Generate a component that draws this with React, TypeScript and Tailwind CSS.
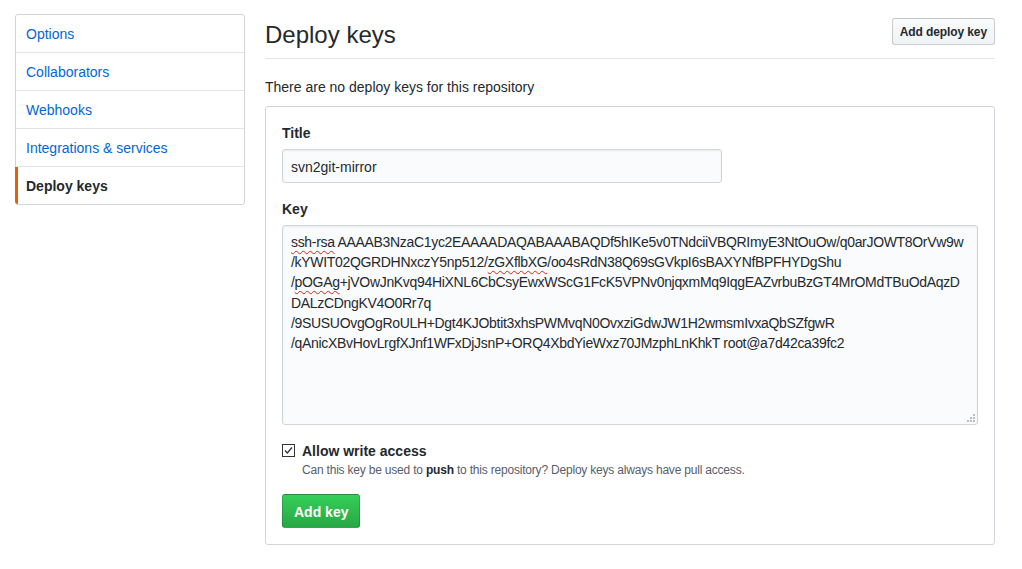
import React from "react";

const menu = [
  { label: "Options" },
  { label: "Collaborators" },
  { label: "Webhooks" },
  { label: "Integrations & services" },
  { label: "Deploy keys", selected: true },
];

const Squiggle = ({ children }: { children: React.ReactNode }) => (
  <span className="underline decoration-wavy decoration-[#e0211b] decoration-1 underline-offset-[3px]">
    {children}
  </span>
);

const Sidebar = () => (
  <nav className="w-[230px] shrink-0 self-start rounded-[3px] border border-[#d1d5da] bg-white">
    {menu.map((item, i) => (
      <a
        key={item.label}
        href="#"
        className={
          "relative block px-[10px] pt-[9px] pb-[7px] text-[14px] leading-[21px] " +
          (i < menu.length - 1 ? "border-b border-[#e1e4e8] " : "") +
          (item.selected ? "font-semibold text-[#24292e]" : "text-[#0366d6]")
        }
      >
        {item.selected && (
          <span className="absolute -left-px top-0 bottom-0 w-[3px] rounded-bl-[3px] bg-[#e36209]" />
        )}
        {item.label}
      </a>
    ))}
  </nav>
);

const KeyText = () => (
  <div className="whitespace-pre text-[14px] leading-[20.2px] tracking-[-0.32px] text-[#24292e]">
    <Squiggle>ssh-rsa</Squiggle>
    {" AAAAB3NzaC1yc2EAAAADAQABAAABAQDf5hIKe5v0TNdciiVBQRImyE3NtOuOw/q0arJOWT8OrVw9w\n/kYWIT02QGRDHNxczY5np512/"}
    <Squiggle>zGXflbXG</Squiggle>
    {"/oo4sRdN38Q69sGVkpI6sBAXYNfBPFHYDgShu\n/"}
    <Squiggle>pOGAg</Squiggle>
    {"+jVOwJnKvq94HiXNL6CbCsyEwxWScG1FcK5VPNv0njqxmMq9IqgEAZvrbuBzGT4MrOMdTBuOdAqzD\nDALzCDngKV4O0Rr7q\n/9SUSUOvgOgRoULH+Dgt4KJObtit3xhsPWMvqN0OvxziGdwJW1H2wmsmIvxaQbSZfgwR\n/qAnicXBvHovLrgfXJnf1WFxDjJsnP+ORQ4XbdYieWxz70JMzphLnKhkT root@a7d42ca39fc2"}
  </div>
);

export default function App() {
  return (
    <div
      className="min-h-screen bg-white text-[#24292e]"
      style={{ fontFamily: '"Liberation Sans", Arial, sans-serif' }}
    >
      <div className="flex gap-[20px] pl-[15px] pt-[14px]">
        <Sidebar />

        <main className="w-[730px] shrink-0">
          <div className="flex items-start justify-between border-b border-[#e1e4e8] pt-[5px] pb-[7px]">
            <h2 className="text-[24px] font-normal leading-[32px] text-[#24292e]">Deploy keys</h2>
            <button className="-mt-px rounded-[3px] border border-[rgba(27,31,35,0.2)] bg-gradient-to-b from-[#fafbfc] to-[#eff3f6] px-[7px] pt-[4px] pb-[2px] text-[12px] font-semibold leading-[19px] tracking-[-0.1px] text-[#24292e]">
              Add deploy key
            </button>
          </div>

          <p className="mt-[18px] mb-[8px] text-[14px] leading-[21px]">
            There are no deploy keys for this repository
          </p>

          <form className="rounded-[3px] border border-[#d1d5da] p-[16px]">
            <label className="block text-[14px] font-semibold leading-[21px]">Title</label>
            <input
              type="text"
              defaultValue="svn2git-mirror"
              className="mt-[5px] block h-[34px] w-[440px] rounded-[3px] border border-[#d1d5da] bg-[#fafbfc] px-[8px] pt-[1px] text-[14px] text-[#24292e] shadow-[inset_0_1px_2px_rgba(27,31,35,0.075)] outline-none"
            />

            <label className="mt-[16px] block text-[14px] font-semibold leading-[21px]">Key</label>
            <div
              role="textbox"
              className="relative mt-[5px] h-[200px] w-full overflow-hidden rounded-[3px] border border-[#d1d5da] bg-[#fafbfc] px-[8px] pt-[6px] shadow-[inset_0_1px_2px_rgba(27,31,35,0.075)]"
            >
              <KeyText />
              <svg
                className="absolute bottom-[2px] right-[2px]"
                width="9"
                height="9"
                viewBox="0 0 9 9"
              >
                <rect x="7" y="1" width="2" height="2" fill="#b8bcc2" />
                <rect x="4" y="4" width="2" height="2" fill="#b8bcc2" />
                <rect x="7" y="4" width="2" height="2" fill="#b8bcc2" />
                <rect x="1" y="7" width="2" height="2" fill="#b8bcc2" />
                <rect x="4" y="7" width="2" height="2" fill="#b8bcc2" />
                <rect x="7" y="7" width="2" height="2" fill="#b8bcc2" />
              </svg>
            </div>

            <div className="mt-[16px] flex">
              <span className="mt-[3px] flex h-[13px] w-[13px] shrink-0 items-center justify-center border border-[#333] bg-white">
                <svg width="11" height="11" viewBox="0 0 11 11">
                  <path d="M2 5.5 L4.3 8 L9 2.5" fill="none" stroke="#333" strokeWidth="1.3" />
                </svg>
              </span>
              <div className="ml-[7px]">
                <div className="text-[14px] font-semibold leading-[21px]">Allow write access</div>
                <div className="text-[12px] leading-[16px] tracking-[-0.2px] text-[#586069]">
                  Can this key be used to <strong className="font-semibold text-[#24292e]">push</strong> to this repository? Deploy keys always have pull access.
                </div>
              </div>
            </div>

            <button
              type="button"
              className="mt-[16px] rounded-[3px] border border-[rgba(27,31,35,0.2)] bg-gradient-to-b from-[#34d058] to-[#28a745] px-[11px] pt-[7px] pb-[5px] text-[14px] font-semibold leading-[20px] text-white"
            >
              Add key
            </button>
          </form>
        </main>
      </div>
    </div>
  );
}
